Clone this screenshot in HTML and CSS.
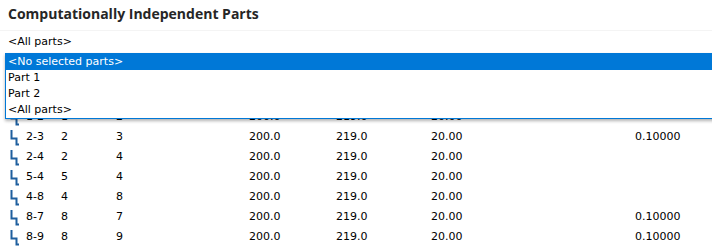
FILE: index.html
```html
<!DOCTYPE html>
<html lang="en">

<head>
    <meta charset="UTF-8">
    <title>Computationally Independent Parts</title>
    <link rel="stylesheet" href="styles.css">
</head>

<body>

    <h1 class="title">Computationally Independent Parts</h1>

    <div class="combo">
        <span class="combo-value">&lt;All parts&gt;</span>

        <ul class="dropdown">
            <li class="selected">&lt;No selected parts&gt;</li>
            <li>Part 1</li>
            <li>Part 2</li>
            <li>&lt;All parts&gt;</li>
        </ul>
    </div>

    <div class="grid">
        <div class="row">
            <svg class="icon" viewBox="0 0 16 20"><path d="M1.5 4V12.5H6.5V18.5H9" /></svg>
            <span>1-2</span><span>1</span><span>2</span><span>200.0</span><span>219.0</span><span>20.00</span><span></span>
        </div>
        <div class="row">
            <svg class="icon" viewBox="0 0 16 20"><path d="M1.5 4V12.5H6.5V18.5H9" /></svg>
            <span>2-3</span><span>2</span><span>3</span><span>200.0</span><span>219.0</span><span>20.00</span><span>0.10000</span>
        </div>
        <div class="row">
            <svg class="icon" viewBox="0 0 16 20"><path d="M1.5 4V12.5H6.5V18.5H9" /></svg>
            <span>2-4</span><span>2</span><span>4</span><span>200.0</span><span>219.0</span><span>20.00</span><span></span>
        </div>
        <div class="row">
            <svg class="icon" viewBox="0 0 16 20"><path d="M1.5 4V12.5H6.5V18.5H9" /></svg>
            <span>5-4</span><span>5</span><span>4</span><span>200.0</span><span>219.0</span><span>20.00</span><span></span>
        </div>
        <div class="row">
            <svg class="icon" viewBox="0 0 16 20"><path d="M1.5 4V12.5H6.5V18.5H9" /></svg>
            <span>4-8</span><span>4</span><span>8</span><span>200.0</span><span>219.0</span><span>20.00</span><span></span>
        </div>
        <div class="row">
            <svg class="icon" viewBox="0 0 16 20"><path d="M1.5 4V12.5H6.5V18.5H9" /></svg>
            <span>8-7</span><span>8</span><span>7</span><span>200.0</span><span>219.0</span><span>20.00</span><span>0.10000</span>
        </div>
        <div class="row">
            <svg class="icon" viewBox="0 0 16 20"><path d="M1.5 4V12.5H6.5V18.5H9" /></svg>
            <span>8-9</span><span>8</span><span>9</span><span>200.0</span><span>219.0</span><span>20.00</span><span>0.10000</span>
        </div>
    </div>

</body>

</html>
```

FILE: styles.css
```css
body {
    margin: 0;
    background: #fff;
    color: #000;
    font-family: "DejaVu Sans", sans-serif;
    font-size: 11px;
    overflow: hidden;
}

.title {
    margin: 0;
    height: 30px;
    padding-left: 8px;
    font-family: "Open Sans", sans-serif;
    font-size: 14px;
    font-weight: 700;
    line-height: 27px;
    color: #262626;
}

.combo {
    position: relative;
    height: 22px;
    padding-left: 8px;
    border-top: 1px solid #f4f4f4;
    line-height: 21px;
}

.dropdown {
    position: absolute;
    top: 22px;
    left: 5px;
    right: -10px;
    margin: 0;
    padding: 0;
    list-style: none;
    background: #fff;
    border: 1px solid #0078d7;
    box-shadow: 0 2px 3px rgba(0, 0, 0, 0.3);
    z-index: 2;

    li {
        height: 16px;
        line-height: 16px;
        padding-left: 2px;
    }

    .selected {
        background: #0078d7;
        color: #fff;
    }
}

.grid {
    padding-top: 53px;
}

.row {
    display: grid;
    grid-template-columns: 16px 35px 55px 133px 87px 95px 204px 1fr;
    align-items: center;
    height: 20px;
    padding-left: 10px;

    .icon {
        width: 16px;
        height: 20px;
        fill: none;
        stroke: #1f5f9e;
        stroke-width: 2;
    }
}
```
